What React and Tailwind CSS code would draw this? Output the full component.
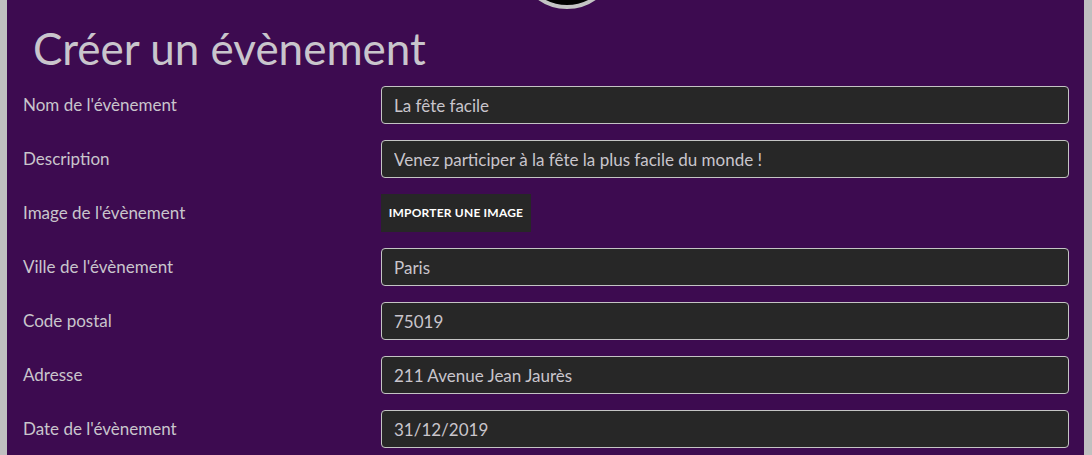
import React from 'react';

const fields = [
  { label: "Nom de l'évènement", value: 'La fête facile' },
  { label: 'Description', value: 'Venez participer à la fête la plus facile du monde !' },
  { label: "Image de l'évènement", upload: true },
  { label: "Ville de l'évènement", value: 'Paris' },
  { label: 'Code postal', value: '75019' },
  { label: 'Adresse', value: '211 Avenue Jean Jaurès' },
  { label: "Date de l'évènement", value: '31/12/2019' },
];

function FieldRow({ field }) {
  return (
    <div className="flex items-center h-[38px] mb-4">
      <label className="w-[358px] shrink-0 text-[17px] text-[#c9c5cc]">{field.label}</label>
      {field.upload ? (
        <button className="h-[38px] w-[150px] bg-[#272727] text-white text-[12px] font-bold tracking-[0.2px]">
          IMPORTER UNE IMAGE
        </button>
      ) : (
        <input
          readOnly
          value={field.value}
          className="flex-1 h-[38px] px-3 rounded-[4px] border border-[#c4c4c4] bg-[#272727] text-[17px] text-[#c9c5cc] outline-none"
        />
      )}
    </div>
  );
}

export default function App() {
  return (
    <div
      className="h-[455px] overflow-hidden bg-[#3d0b50] border-l-[7px] border-r-[8px] border-[#c0c0c0]"
      style={{ fontFamily: 'Lato, "Noto Sans", sans-serif' }}
    >
      {/* avatar coupé en haut */}
      <div className="flex justify-center -mt-[91px]">
        <div className="w-[100px] h-[100px] rounded-full border-[4px] border-[#c4c4c4] bg-black ml-[42px]" />
      </div>

      <h1 className="pl-[26px] pt-[13px] text-[44px] leading-[52px] text-[#c9c5cc]">Créer un évènement</h1>

      <div className="pl-[16px] pr-[15px] pt-[12px]">
        {fields.map((f) => (
          <FieldRow key={f.label} field={f} />
        ))}
      </div>
    </div>
  );
}
